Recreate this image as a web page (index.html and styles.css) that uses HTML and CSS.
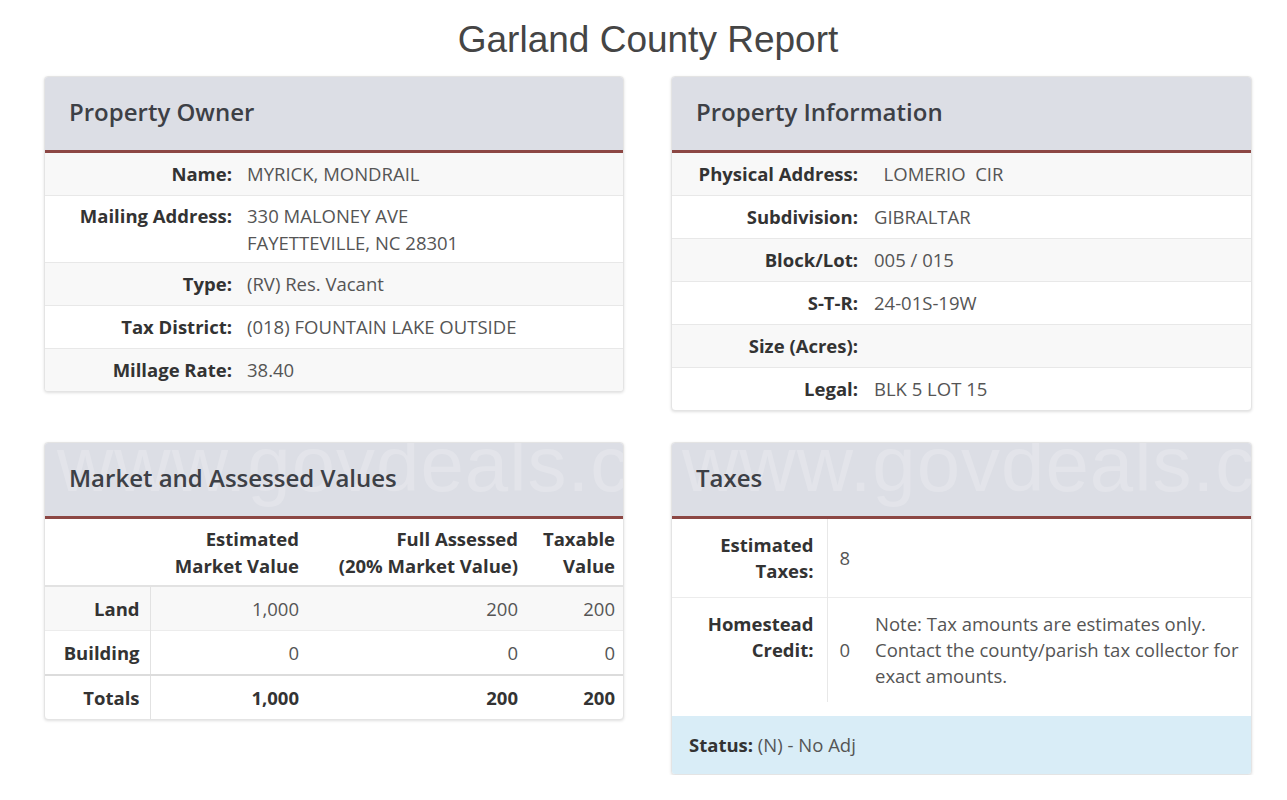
FILE: index.html
```html
<!DOCTYPE html>
<html lang="en">
<head>
<meta charset="utf-8">
<title>Garland County Report</title>
<link rel="stylesheet" href="styles.css">
</head>
<body>
<main class="page">
  <h1 class="report-title">Garland County Report</h1>
  <div class="cards">
    <section class="card">
      <header class="card-head"><h2>Property Owner</h2></header>
      <table class="kv">
        <tr><th>Name:</th><td>MYRICK, MONDRAIL</td></tr>
        <tr class="tall"><th>Mailing Address:</th><td>330 MALONEY AVE<br>FAYETTEVILLE, NC 28301</td></tr>
        <tr><th>Type:</th><td>(RV) Res. Vacant</td></tr>
        <tr><th>Tax District:</th><td>(018) FOUNTAIN LAKE OUTSIDE</td></tr>
        <tr><th>Millage Rate:</th><td>38.40</td></tr>
      </table>
    </section>

    <section class="card">
      <header class="card-head"><h2>Property Information</h2></header>
      <table class="kv kv-right">
        <tr><th>Physical Address:</th><td class="pre">  LOMERIO  CIR</td></tr>
        <tr><th>Subdivision:</th><td>GIBRALTAR</td></tr>
        <tr><th>Block/Lot:</th><td>005 / 015</td></tr>
        <tr><th>S-T-R:</th><td>24-01S-19W</td></tr>
        <tr><th>Size (Acres):</th><td></td></tr>
        <tr><th>Legal:</th><td>BLK 5 LOT 15</td></tr>
      </table>
    </section>

    <section class="card">
      <header class="card-head"><span class="watermark wm-left" aria-hidden="true">www.govdeals.com</span><h2>Market and Assessed Values</h2></header>
      <table class="values">
        <colgroup><col class="c1"><col class="c2"><col class="c3"><col class="c4"></colgroup>
        <thead>
          <tr><th></th><th>Estimated<br>Market Value</th><th>Full Assessed<br>(20% Market Value)</th><th>Taxable<br>Value</th></tr>
        </thead>
        <tbody>
          <tr class="stripe"><th>Land</th><td>1,000</td><td>200</td><td>200</td></tr>
          <tr><th>Building</th><td>0</td><td>0</td><td>0</td></tr>
        </tbody>
        <tfoot>
          <tr><th>Totals</th><td>1,000</td><td>200</td><td>200</td></tr>
        </tfoot>
      </table>
    </section>

    <section class="card">
      <header class="card-head"><span class="watermark wm-right" aria-hidden="true">www.govdeals.com</span><h2>Taxes</h2></header>
      <table class="taxes">
        <colgroup><col class="t1"><col class="t2"><col></colgroup>
        <tr><th>Estimated<br>Taxes:</th><td class="num">8</td><td></td></tr>
        <tr><th>Homestead<br>Credit:</th><td class="num">0</td><td class="note">Note: Tax amounts are estimates only. Contact the county/parish tax collector for exact amounts.</td></tr>
      </table>
      <footer class="card-foot"><strong>Status:</strong> (N) - No Adj</footer>
    </section>
  </div>
</main>
</body>
</html>
```

FILE: styles.css
```css
* { box-sizing: border-box; }

html, body {
  margin: 0;
  padding: 0;
  background: #ffffff;
}

body {
  font-family: "Open Sans", "Noto Sans", sans-serif;
  font-size: 18.5px;
  color: #555;
}

.page {
  width: 1208px;
  margin-left: 44px;
}

.report-title {
  margin: 0;
  padding-top: 18px;
  height: 76px;
  text-align: center;
  font-family: "Liberation Sans", Arial, sans-serif;
  font-weight: normal;
  font-size: 37px;
  line-height: 44px;
  color: #454545;
}

.cards {
  display: grid;
  grid-template-columns: 580px 581px;
  column-gap: 47px;
  row-gap: 31px;
  align-items: start;
}

.card {
  background: #fff;
  border: 1px solid #e4e4e4;
  border-radius: 4px;
  box-shadow: 0 1px 3px rgba(0, 0, 0, 0.13);
  overflow: hidden;
}

.card-head {
  position: relative;
  overflow: hidden;
  background: #dcdee5;
  border-bottom: 3px solid #8c4744;
  height: 76px;
  padding: 20px 24px 0;
}

.card-head h2 {
  position: relative;
  margin: 0;
  font-size: 24px;
  line-height: 30px;
  font-weight: 600;
  color: #3d4046;
}

.watermark {
  position: absolute;
  top: -18px;
  font-family: "Liberation Sans", Arial, sans-serif;
  font-size: 78px;
  line-height: 1;
  color: rgba(255, 255, 255, 0.2);
  white-space: nowrap;
  letter-spacing: 1px;
}

.wm-left { left: 12px; }
.wm-right { left: 10px; }

/* key / value tables */
.kv {
  width: 100%;
  border-collapse: collapse;
  table-layout: fixed;
}

.kv th {
  width: 187px;
  text-align: right;
  font-weight: 700;
  color: #333;
  padding: 10px 0;
  line-height: 22px;
  vertical-align: top;
}

.kv td {
  padding: 10px 10px 10px 15px;
  line-height: 22px;
  vertical-align: top;
}

.kv-right th { width: 186px; }
.kv-right td { padding-left: 16px; }

.kv tr + tr th,
.kv tr + tr td {
  border-top: 1px solid #e8e8e8;
}

.kv tr:nth-child(odd) {
  background: #f8f8f8;
}

.kv tr.tall th,
.kv tr.tall td {
  padding-top: 6px;
  padding-bottom: 6px;
  line-height: 27px;
}

.pre { white-space: pre; }

/* market values */
.values {
  width: 100%;
  border-collapse: collapse;
  table-layout: fixed;
}

.values .c1 { width: 105px; }
.values .c2 { width: 159px; }
.values .c3 { width: 219px; }

.values th,
.values td {
  text-align: right;
  padding: 10px 10px;
  line-height: 23px;
}

.values th { color: #333; font-weight: 700; }

.values thead th {
  padding-top: 6px;
  padding-bottom: 6px;
  line-height: 27px;
  border-bottom: 2px solid #e2e2e2;
  vertical-align: bottom;
}

.values tr > :last-child { padding-right: 8px; }

.values tbody th,
.values tfoot th {
  border-right: 1px solid #e2e2e2;
}

.values tbody tr + tr > * { border-top: 1px solid #ececec; }

.values tr.stripe { background: #f8f8f8; }

.values tfoot th,
.values tfoot td {
  border-top: 2px solid #dcdcdc;
  font-weight: 700;
  color: #333;
}

/* taxes */
.taxes {
  width: 100%;
  border-collapse: collapse;
  table-layout: fixed;
  margin-bottom: 14px;
}

.taxes .t1 { width: 155px; }
.taxes .t2 { width: 48px; }

.taxes th {
  text-align: right;
  font-weight: 700;
  color: #333;
  padding: 13px 13px 13px 0;
  line-height: 26px;
  vertical-align: top;
  border-right: 1px solid #e8e8e8;
}

.taxes td {
  line-height: 26px;
  vertical-align: middle;
  padding: 14px 0 14px 0;
}

.taxes td.num { padding-left: 12px; }

.taxes td.note {
  vertical-align: top;
  padding: 13px 6px 13px 0;
}

.taxes tr + tr > * { border-top: 1px solid #ececec; }

.card-foot {
  background: #d9edf7;
  padding: 17px 17px;
  line-height: 24px;
}

.card-foot strong { color: #333; }
```
